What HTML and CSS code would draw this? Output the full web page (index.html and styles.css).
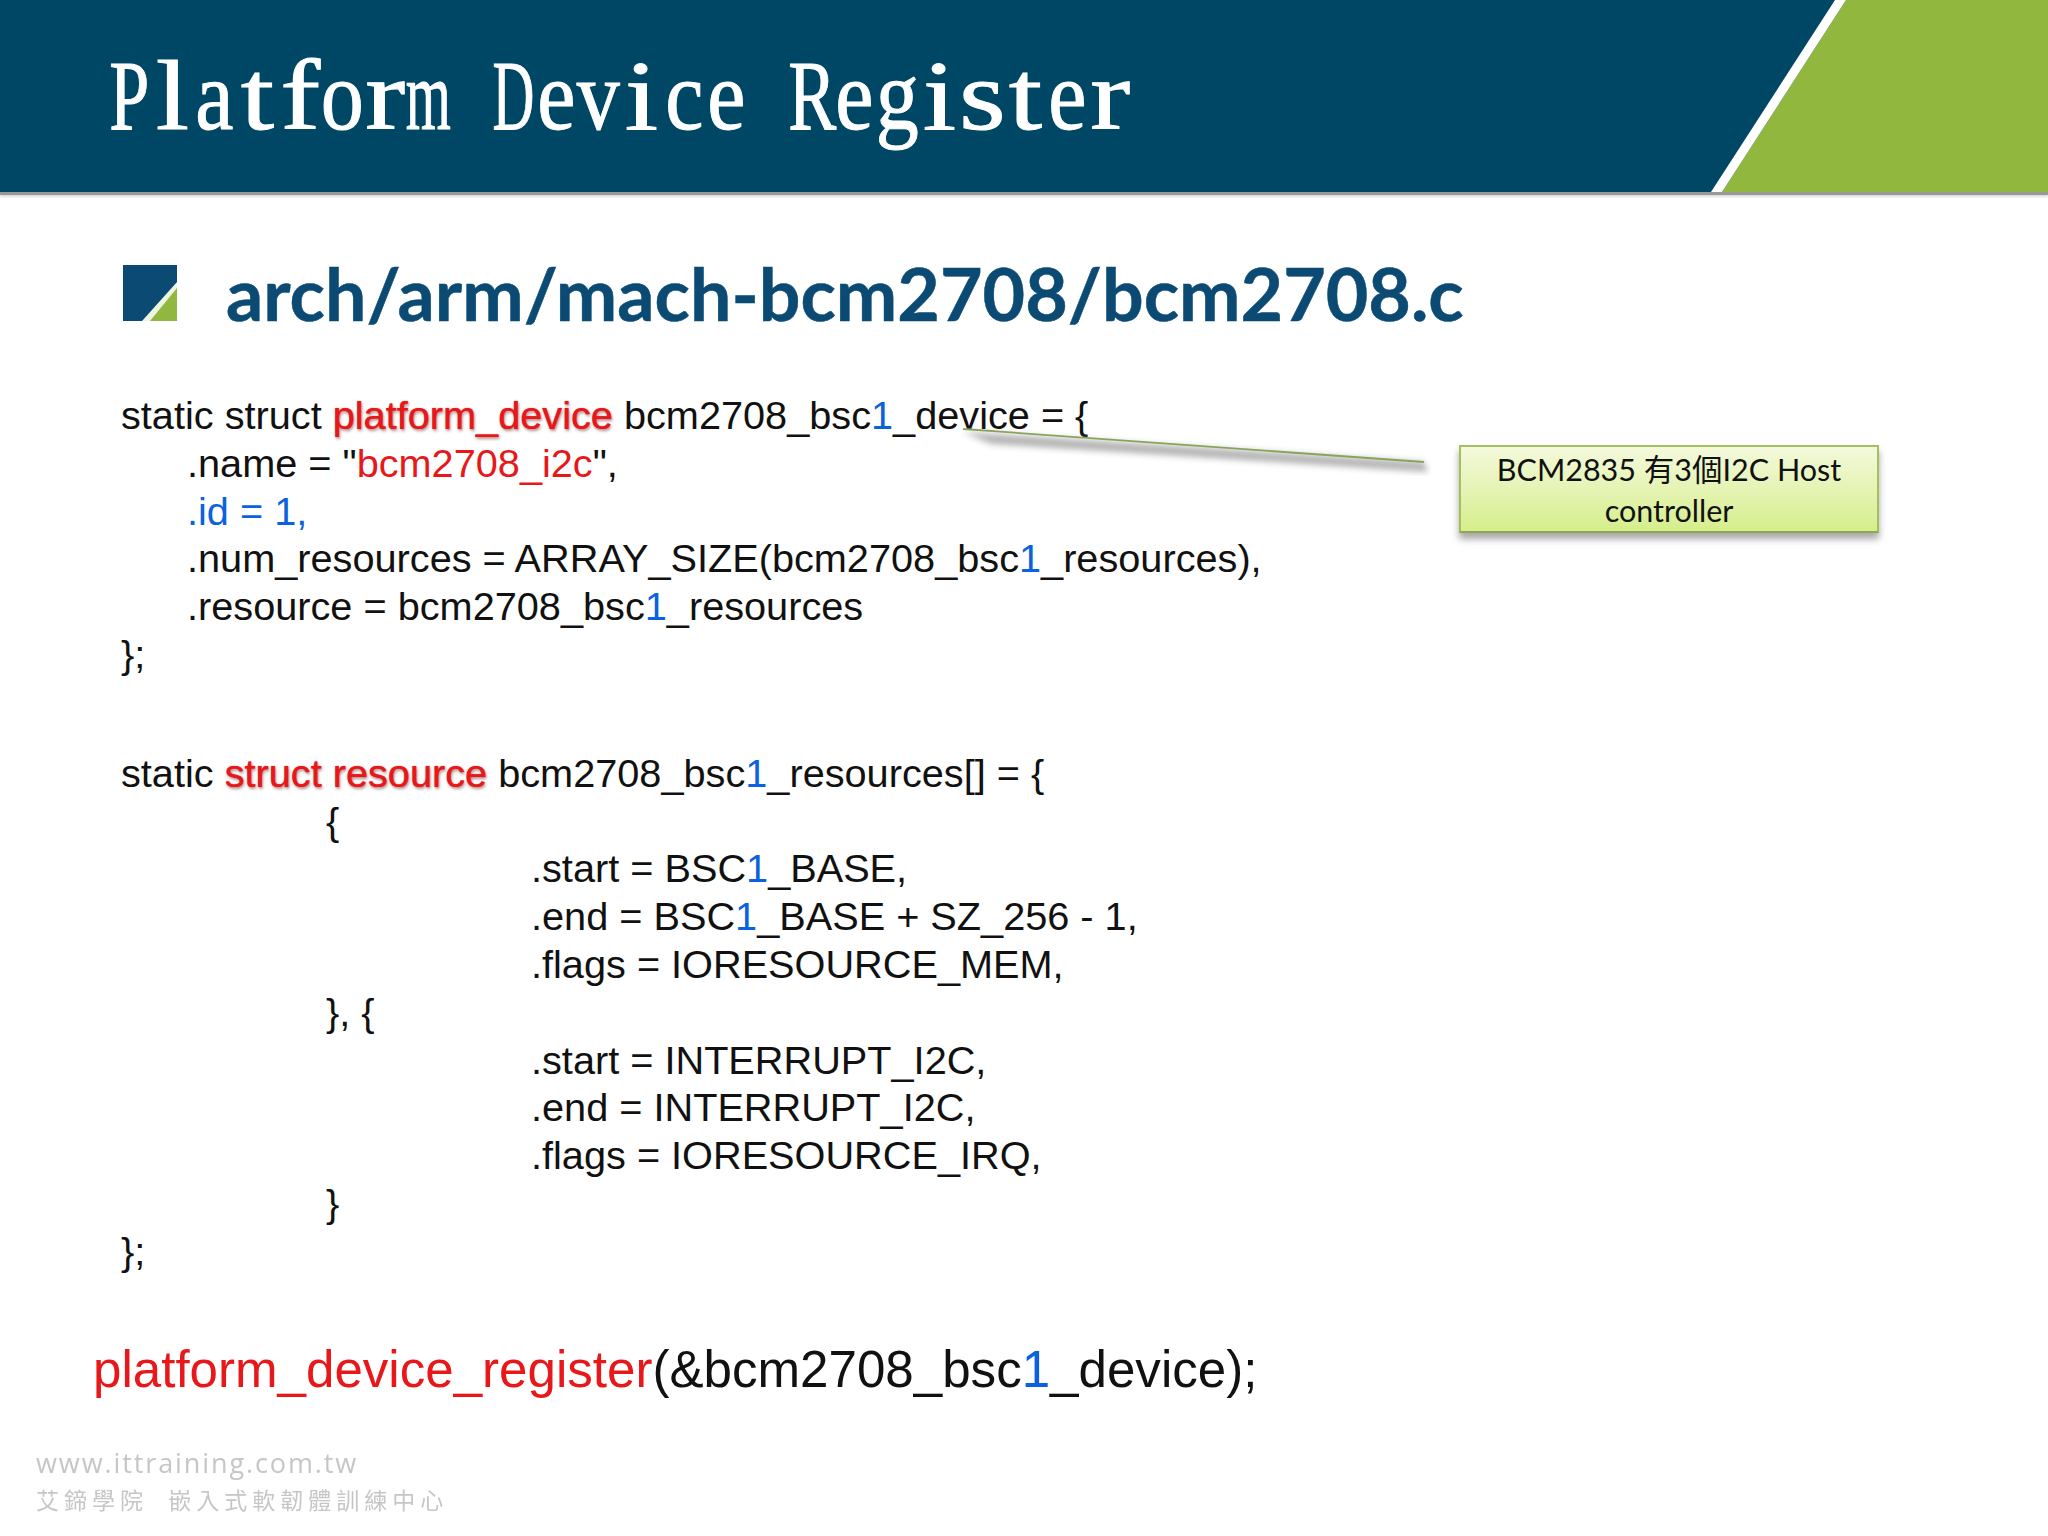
FILE: index.html
```html
<!DOCTYPE html>
<html lang="zh-Hant">
<head>
<meta charset="utf-8">
<title>Platform Device Register</title>
<link rel="stylesheet" href="styles.css">
</head>
<body>
<div class="slide">
  <header class="banner">
    <h1 class="title"><span class="word"><i class="wide">P</i><i class="thin">l</i><i>a</i><i class="thin">t</i><i class="thin">f</i><i>o</i><i class="thin">r</i><i class="wider">m</i></span><span class="word"><i class="wider">D</i><i>e</i><i>v</i><i class="thin">i</i><i>c</i><i>e</i></span><span class="word"><i class="wide">R</i><i>e</i><i>g</i><i class="thin">i</i><i class="thin">s</i><i class="thin">t</i><i>e</i><i class="thin">r</i></span></h1>
    <svg class="wedge" viewBox="0 0 448 192" width="448" height="192" aria-hidden="true">
      <polygon points="246,0 448,0 448,192 122,192" fill="#92b73f"/>
      <polygon points="235,0 246,0 122,192 111,192" fill="#ffffff"/>
    </svg>
  </header>

  <section class="heading">
    <svg class="bullet" viewBox="0 0 54 56" width="54" height="56" aria-hidden="true">
      <rect width="54" height="56" fill="#0b4a73"/>
      <polygon points="54,20 54,56 23,56" fill="#92b73f"/>
      <polygon points="54,17 54,23 27,56 19,56" fill="#eef5df"/>
    </svg>
    <h2 class="path">arch/arm/mach-bcm2708/bcm2708.c</h2>
  </section>

  <section class="code">
    <div class="line">static struct <span class="hot">platform_device</span> bcm2708_bsc<span class="num">1</span>_device = {</div>
    <div class="line i1">.name = "<span class="red">bcm2708_i2c</span>",</div>
    <div class="line i1 num">.id = 1,</div>
    <div class="line i1">.num_resources = ARRAY_SIZE(bcm2708_bsc<span class="num">1</span>_resources),</div>
    <div class="line i1">.resource = bcm2708_bsc<span class="num">1</span>_resources</div>
    <div class="line">};</div>
  </section>

  <section class="code second">
    <div class="line">static <span class="hot">struct resource</span> bcm2708_bsc<span class="num">1</span>_resources[] = {</div>
    <div class="line i2">{</div>
    <div class="line i3">.start = BSC<span class="num">1</span>_BASE,</div>
    <div class="line i3">.end = BSC<span class="num">1</span>_BASE + SZ_256 - 1,</div>
    <div class="line i3">.flags = IORESOURCE_MEM,</div>
    <div class="line i2">}, {</div>
    <div class="line i3">.start = INTERRUPT_I2C,</div>
    <div class="line i3">.end = INTERRUPT_I2C,</div>
    <div class="line i3">.flags = IORESOURCE_IRQ,</div>
    <div class="line i2">}</div>
    <div class="line">};</div>
  </section>

  <p class="call"><span class="red">platform_device_register</span>(&amp;bcm2708_bsc<span class="num">1</span>_device);</p>

  <footer class="mark">
    <div class="mark-url">www.ittraining.com.tw</div>
    <div class="mark-name">艾鍗學院 &nbsp;嵌入式軟韌體訓練中心</div>
  </footer>

  <svg class="leader" viewBox="0 0 470 50" width="470" height="50" aria-hidden="true">
    <polygon class="leader-shadow" points="2,6 463,36 467,46 30,18"/>
    <line x1="2" y1="3" x2="463" y2="36" stroke="#8aa35a" stroke-width="1.8"/>
  </svg>
  <aside class="callout">BCM2835 有3個I2C Host<br>controller</aside>
</div>
</body>
</html>
```

FILE: styles.css
```css
html, body { margin: 0; padding: 0; background: #fff; }
.slide {
  position: relative;
  width: 2048px;
  height: 1536px;
  overflow: hidden;
  background: #fff;
  font-family: "Liberation Sans", Arial, sans-serif;
  color: #111;
}
.banner {
  position: relative;
  height: 192px;
  background: #004766;
  box-shadow: 0 3px 0 #999, 0 5px 2px #ddd;
}
.title {
  display: flex;
  gap: 42.67px;
  margin: 0;
  padding: 46px 0 0 108px;
  font: 400 100px/1 "Liberation Serif", serif;
  color: #fff;
  -webkit-text-stroke: 1px #fff;
  white-space: nowrap;
}
.word { display: flex; }
.title i {
  display: flex;
  justify-content: center;
  width: 42.67px;
  font-style: normal;
  transform: scaleX(.86);
}
.title .thin { transform: scaleX(1.2); }
.title .wide { transform: scaleX(.72); }
.title .wider { transform: scaleX(.58); }
.wedge { position: absolute; right: 0; top: 0; }
.heading {
  display: flex;
  align-items: center;
  padding: 73px 0 0 123px;
  height: 56px;
}
.bullet { flex: none; }
.path {
  margin: 0 0 0 49px;
  font: 700 72px/1 Lato, sans-serif;
  color: #0b4a73;
  -webkit-text-stroke: .5px #0b4a73;
  white-space: nowrap;
  transform: scaleX(1.02);
  transform-origin: 0 50%;
}
.code {
  padding: 71px 0 0 121px;
  font-size: 39.7px;
  line-height: 47.8px;
}
.second { padding-top: 71px; }
.line { white-space: nowrap; height: 47.8px; }
.i1 { padding-left: 66px; }
.i2 { padding-left: 205px; }
.i3 { padding-left: 410px; }
.hot { color: #e8181a; text-shadow: 1px 2px 3px rgba(110,50,50,.55), 0 0 1px #e8181a; }
.red { color: #e8181a; }
.num { color: #0a62e0; }
.call {
  margin: 64px 0 0 93px;
  font-size: 51.1px;
  line-height: 60px;
  white-space: nowrap;
}
.mark { margin: 46px 0 0 36px; color: #c6c6c6; filter: blur(.7px); }
.mark-url { font: 400 27px/34px "Open Sans", sans-serif; letter-spacing: 1.9px; white-space: nowrap; }
.mark-name { font: 400 23px/38px "Noto Sans CJK TC", sans-serif; letter-spacing: 5px; white-space: nowrap; }
.leader { position: absolute; left: 961px; top: 426px; }
.leader-shadow { fill: #b4b4b4; filter: blur(3px); }
.callout {
  position: absolute;
  left: 1459px;
  top: 445px;
  width: 420px;
  height: 88px;
  box-sizing: border-box;
  border: 2px solid #a4c05e;
  border-bottom-color: #8ea552;
  background: linear-gradient(#f4f9dc, #d6ee8c);
  box-shadow: 0 6px 7px rgba(110,110,110,.6);
  font: 400 30.5px/41px Lato, "Noto Sans CJK TC", sans-serif;
  text-align: center;
  padding-top: 2px;
  color: #111;
}
```
